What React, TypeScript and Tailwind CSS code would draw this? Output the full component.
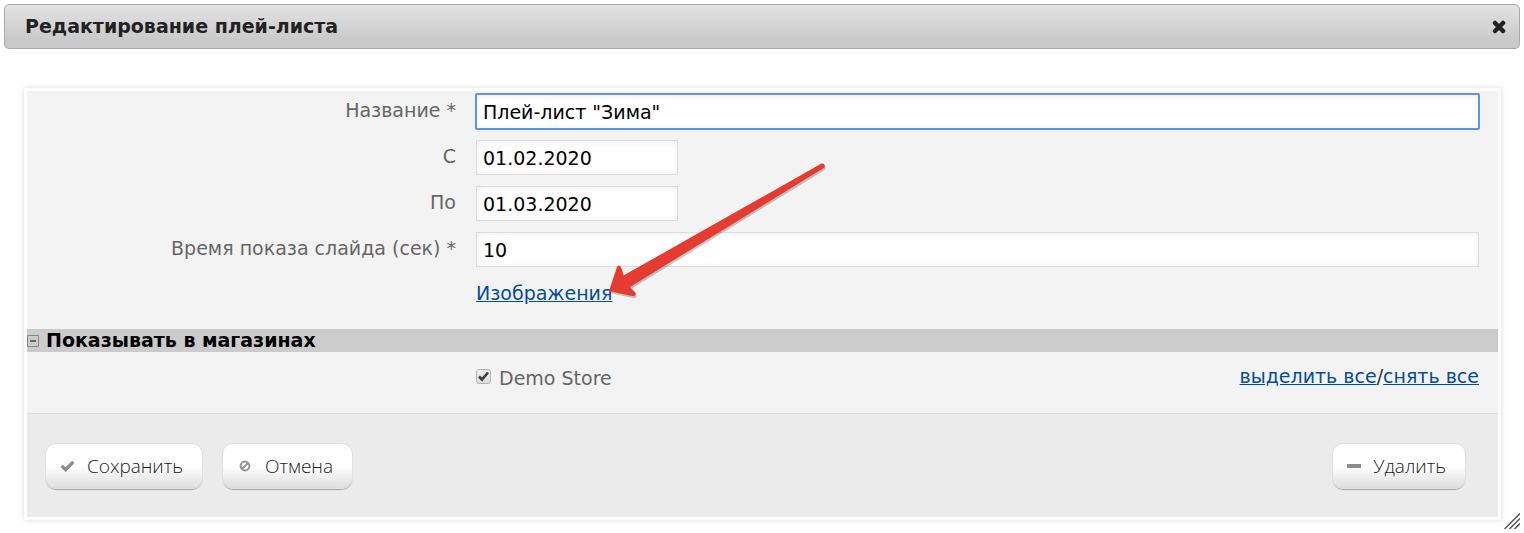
import { useState } from 'react'
import type { ReactNode } from 'react'

const INPUT =
  'h-[35px] border border-[#dcdcdc] bg-white px-1.5 text-black shadow-[inset_0_1px_6px_rgba(0,0,0,0.07)]'

const PLAIN = 'outline-none focus:outline-2 focus:-outline-offset-1 focus:outline-[#6a9ceb]'
const ACTIVE = 'rounded-[1px] outline-2 -outline-offset-1 outline-[#5e93e8]'

const BUTTON =
  'flex h-11 items-center rounded-[10px] bg-linear-to-b from-white from-50% to-[#dedede] font-["Open_Sans",sans-serif] text-[19px] font-light text-[#222] shadow-[0_0_0_1px_#e1e1e1,0_2px_1px_#a6a6a6] cursor-pointer'

function Row({ label, htmlFor, children }: { label?: string; htmlFor?: string; children: ReactNode }) {
  return (
    <div className="grid grid-cols-[429px_1fr] gap-x-5">
      <div className="pt-1 text-right leading-6 text-[#666]">
        {label && <label htmlFor={htmlFor}>{label}</label>}
      </div>
      <div className="flex">{children}</div>
    </div>
  )
}

function CloseIcon() {
  return (
    <svg width="14" height="14" viewBox="0 0 14 14" stroke="#222" strokeWidth="4.5" strokeLinecap="round">
      <path d="M3 3l8 8M11 3l-8 8" />
    </svg>
  )
}

function CheckIcon() {
  return (
    <svg width="15" height="13" viewBox="0 0 15 13" fill="#8c8c8c">
      <path d="M0.5 7L2.7 4.7L5.6 7.2L12.2 0.8L14.5 3L5.8 12Z" />
    </svg>
  )
}

function BanIcon() {
  return (
    <svg width="12" height="12" viewBox="0 0 12 12" fill="none" stroke="#949494" strokeWidth="2">
      <circle cx="6" cy="6" r="4.4" />
      <path d="M3 9l6-6" />
    </svg>
  )
}

function MinusIcon() {
  return (
    <svg width="14" height="4" viewBox="0 0 14 4">
      <rect width="14" height="4" fill="#8c8c8c" />
    </svg>
  )
}

function Arrow() {
  return (
    <svg className="pointer-events-none absolute top-[70px] left-[581px]" width="220" height="138" viewBox="608 161 220 138">
      <path
        d="M609 291L617 267.5Q619 264 621.2 267.5L623.5 275.5L821.5 163.5Q825.5 163 824.5 167.5L630 287L635.5 293Q636.5 296.5 632 296Z"
        fill="#000"
        opacity="0.22"
        transform="translate(1 2)"
      />
      <path
        d="M609 291L617 267Q619 264 621.2 267.5L623.5 275.5L821.5 163.5Q825.5 163 824.5 167.5L630 287L635.5 293Q636.5 296.5 632 296Z"
        fill="#e63b30"
      />
    </svg>
  )
}

export default function App() {
  const [name, setName] = useState('Плей-лист "Зима"')
  const [from, setFrom] = useState('01.02.2020')
  const [to, setTo] = useState('01.03.2020')
  const [seconds, setSeconds] = useState('10')
  const [checked, setChecked] = useState(true)
  const [open, setOpen] = useState(true)

  return (
    <div className='relative bg-white p-1 pb-[13px] font-["DejaVu_Sans",sans-serif] text-[19px]'>
      <header className="flex h-[45px] items-center justify-between rounded-[5px] border border-[#aaa] bg-linear-to-b from-[#e3e3e3] to-[#cacaca] to-80% pr-[13px] pl-5">
        <h1 className="font-bold text-[#222]">Редактирование плей-листа</h1>
        <button type="button" aria-label="Закрыть" className="cursor-pointer">
          <CloseIcon />
        </button>
      </header>

      <form
        className="relative mt-[39px] mr-[19px] ml-5 border-3 border-white bg-[#f3f3f3] shadow-[0_0_5px_rgba(0,0,0,0.16)]"
        onSubmit={e => e.preventDefault()}
      >
        <div className="flex flex-col gap-[11px] pt-[3px] pr-[19px]">
          <Row label="Название *" htmlFor="name">
            <input id="name" className={`${INPUT} ${ACTIVE} flex-1`} value={name} onChange={e => setName(e.target.value)} />
          </Row>
          <Row label="С" htmlFor="from">
            <input id="from" className={`${INPUT} ${PLAIN} w-[202px]`} value={from} onChange={e => setFrom(e.target.value)} />
          </Row>
          <Row label="По" htmlFor="to">
            <input id="to" className={`${INPUT} ${PLAIN} w-[202px]`} value={to} onChange={e => setTo(e.target.value)} />
          </Row>
          <Row label="Время показа слайда (сек) *" htmlFor="seconds">
            <input id="seconds" className={`${INPUT} ${PLAIN} flex-1`} value={seconds} onChange={e => setSeconds(e.target.value)} />
          </Row>
          <Row>
            <a href="#images" className="mt-[3px] leading-6 text-[#034d9c] underline">Изображения</a>
          </Row>
        </div>

        <h2 className="mt-6 h-[23px] bg-[#cbcbcb] leading-[23px] font-bold text-black">
          <button type="button" aria-expanded={open} onClick={() => setOpen(!open)} className="flex items-center gap-[7px] cursor-pointer">
            <svg width="12" height="12" viewBox="0 0 12 12" fill="none">
              <path d="M0.5 0.5h11v11h-11z" stroke="#888" />
              <path d={open ? 'M3 6h6' : 'M3 6h6M6 3v6'} stroke="#444" strokeWidth="1.5" />
            </svg>
            Показывать в магазинах
          </button>
        </h2>

        {open && (
          <div className="flex h-[61px] items-start justify-between pt-3 pr-[19px] pl-[449px] leading-6 text-[#666]">
            <label className="flex items-center gap-2 pt-0.5">
              <span className="relative mb-1 flex">
                <input
                  type="checkbox"
                  checked={checked}
                  onChange={e => setChecked(e.target.checked)}
                  className="size-[15px] appearance-none rounded-[3px] border border-[#b5b5b5] bg-linear-to-b from-[#f0f0f0] to-[#dcdcdc]"
                />
                {checked && (
                  <svg className="pointer-events-none absolute inset-0" width="15" height="15" viewBox="0 0 15 15" fill="none" stroke="#3c3c3c" strokeWidth="2.6">
                    <path d="M3 7.5l3 3L12 3.5" />
                  </svg>
                )}
              </span>
              Demo Store
            </label>
            <p className="text-[#333]">
              <a href="#all" className="text-[#034d9c] underline">выделить все</a>/
              <a href="#none" className="text-[#034d9c] underline">снять все</a>
            </p>
          </div>
        )}

        <footer className="flex gap-[21px] border-t border-[#dcdcdc] bg-[#ebebeb] px-[19px] pt-[30px] pb-[29px]">
          <button type="submit" className={`${BUTTON} gap-3 pr-[19px] pl-3.5`}>
            <CheckIcon />
            Сохранить
          </button>
          <button type="button" className={`${BUTTON} gap-3.5 pr-[19px] pl-4`}>
            <BanIcon />
            Отмена
          </button>
          <button type="button" className={`${BUTTON} mr-[14px] ml-auto gap-3 pr-[19px] pl-3.5`}>
            <MinusIcon />
            Удалить
          </button>
        </footer>

        <Arrow />
      </form>

      <svg className="absolute right-1 bottom-1" width="16" height="16" viewBox="0 0 16 16" stroke="#555" strokeWidth="1.5">
        <path d="M0.5 16L16 0.5M5.500 16L16 5.500M10.500 16L16 10.500" />
      </svg>
    </div>
  )
}
